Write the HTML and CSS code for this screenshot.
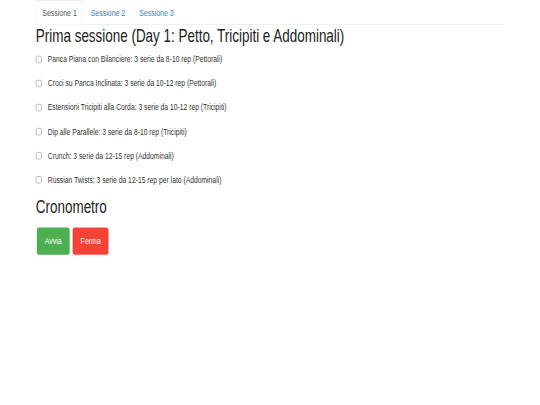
FILE: index.html
```html
<!DOCTYPE html>
<html lang="it">
<head>
<meta charset="utf-8">
<title>Allenamento</title>
<link rel="stylesheet" href="styles.css">
</head>
<body>
<div class="stage">
  <div class="container">
    <ul class="tabs">
      <li><a class="tab active" href="#s1">Sessione 1</a></li>
      <li><a class="tab" href="#s2">Sessione 2</a></li>
      <li><a class="tab" href="#s3">Sessione 3</a></li>
    </ul>
    <h2 class="title">Prima sessione (Day 1: Petto, Tricipiti e Addominali)</h2>
    <div class="list">
      <label class="item"><input type="checkbox" class="box"><span>Panca Piana con Bilanciere: 3 serie da 8-10 rep (Pettorali)</span></label>
      <label class="item"><input type="checkbox" class="box"><span>Croci su Panca Inclinata: 3 serie da 10-12 rep (Pettorali)</span></label>
      <label class="item"><input type="checkbox" class="box"><span>Estensioni Tricipiti alla Corda: 3 serie da 10-12 rep (Tricipiti)</span></label>
      <label class="item"><input type="checkbox" class="box"><span>Dip alle Parallele: 3 serie da 8-10 rep (Tricipiti)</span></label>
      <label class="item"><input type="checkbox" class="box"><span>Crunch: 3 serie da 12-15 rep (Addominali)</span></label>
      <label class="item"><input type="checkbox" class="box"><span>Russian Twists: 3 serie da 12-15 rep per lato (Addominali)</span></label>
    </div>
    <h2 class="title sub">Cronometro</h2>
    <div class="buttons">
      <button class="btn start">Avvia</button>
      <button class="btn stop">Ferma</button>
    </div>
  </div>
</div>
</body>
</html>
```

FILE: styles.css
```css
html, body {
  margin: 0;
  padding: 0;
  background: #fff;
  overflow: hidden;
}

.stage {
  width: 1084px;
  height: 620px;
  transform: scale(0.4977, 0.65);
  transform-origin: 0 0;
  font-family: "Liberation Sans", Arial, sans-serif;
  font-size: 14px;
  line-height: 20px;
  color: #333;
}

.container {
  width: 940px;
  margin: 0 auto;
  padding: 0 15px;
}

.tabs {
  list-style: none;
  margin: 0;
  padding: 0;
  display: flex;
  gap: 2px;
  border-bottom: 1px solid #e6e6ee;
}

.tabs li {
  margin-bottom: -1px;
}

.tab {
  display: block;
  padding: 8px 12px;
  line-height: 20px;
  border: 1px solid transparent;
  border-radius: 4px 4px 0 0;
  color: #1f84e6;
  text-decoration: none;
}

.tab.active {
  color: #555;
  background: #fff;
  border-color: #e6e6ee;
  border-bottom-color: transparent;
}

.title {
  font-size: 27px;
  font-weight: 400;
  line-height: 1.1;
  color: #222;
  margin: 4px 0 10px;
}

.title.sub {
  margin: 18px 0 16px;
}

.list {
  display: flex;
  flex-direction: column;
  gap: 17px;
}

.item {
  display: flex;
  align-items: center;
  gap: 12px;
  height: 20px;
  font-size: 13.6px;
}

.box {
  appearance: none;
  -webkit-appearance: none;
  margin: 0;
  width: 12px;
  height: 11px;
  border: 1.5px solid #8c8c8c;
  border-radius: 3px;
  background: #fff;
  box-sizing: border-box;
}

.buttons {
  display: flex;
  gap: 6px;
  padding-left: 2px;
}

.btn {
  font-family: inherit;
  font-size: 14px;
  line-height: 20px;
  padding: 11px 16px;
  border: none;
  border-radius: 4px;
  color: #fff;
}

.btn.start {
  background: #4caf50;
}

.btn.stop {
  background: #f44336;
}
```
